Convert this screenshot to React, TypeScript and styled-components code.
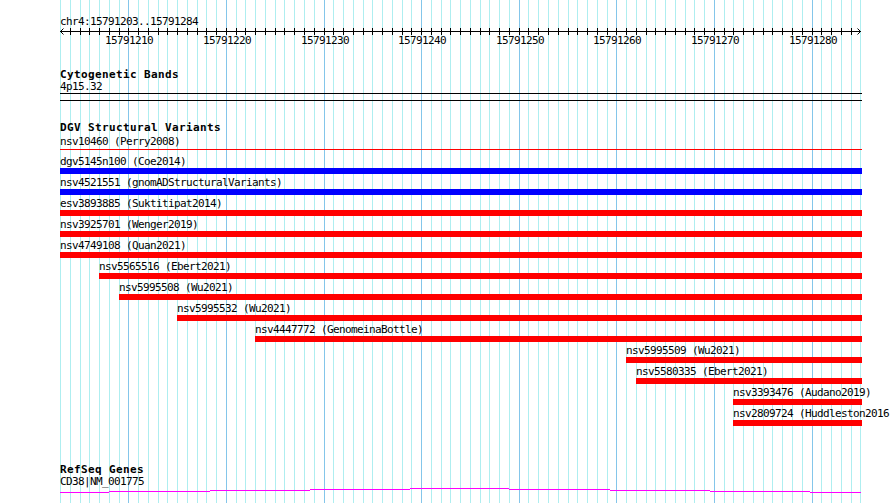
import React from "react";
import styled, { createGlobalStyle } from "styled-components";

const ORIGIN = 60;
const SCALE = 9.76;
const START_BP = 15791203;
const SPAN_BP = 82;
const TRACK_WIDTH = 802;

const pos = (k: number) => Math.round(ORIGIN + k * SCALE);
const rel = (k: number) => pos(k) - ORIGIN;

const GlobalStyle = createGlobalStyle`
  html, body {
    margin: 0;
    padding: 0;
    background: #ffffff;
    overflow: hidden;
  }
`;

const Page = styled.div`
  position: relative;
  width: 890px;
  height: 503px;
  overflow: hidden;
  background: #ffffff;
  color: #000000;
  font-family: "DejaVu Sans Mono", "Liberation Mono", monospace;
`;

const GridLayer = styled.svg`
  position: absolute;
  top: 0;
  left: 0;
  width: 890px;
  height: 503px;
  z-index: 0;
`;

const Column = styled.div`
  position: relative;
  z-index: 1;
  display: flex;
  flex-direction: column;
  width: ${TRACK_WIDTH}px;
  margin-left: ${ORIGIN}px;
`;

const Header = styled.header`
  display: flex;
  flex-direction: column;
  padding-top: 15px;
`;

const Label = styled.div`
  font-size: 11px;
  line-height: 13px;
  letter-spacing: -0.62px;
  white-space: nowrap;
`;

const RulerSvg = styled.svg`
  display: block;
  overflow: visible;
  width: ${TRACK_WIDTH}px;
  height: 18px;
`;

const RulerText = styled.text`
  font-family: "DejaVu Sans Mono", "Liberation Mono", monospace;
  font-size: 11px;
  letter-spacing: -0.62px;
  fill: #000000;
`;

const Track = styled.section<{ $gap: number }>`
  display: flex;
  flex-direction: column;
  margin-top: ${(p) => p.$gap}px;
`;

const TrackTitle = styled.h2`
  margin: 0;
  padding-top: 2px;
  font-size: 11px;
  font-weight: bold;
  line-height: 10px;
  letter-spacing: 0.38px;
  white-space: nowrap;
`;

const BandOutline = styled.div`
  box-sizing: border-box;
  height: 8px;
  border-top: 1px solid #000000;
  border-bottom: 1px solid #000000;
`;

const FeatureRow = styled.div`
  display: flex;
  flex-direction: column;
`;

const FeatureLabel = styled(Label)`
  padding-top: 2px;
`;

const Bar = styled.div<{ $color: string }>`
  height: 6px;
  background: ${(p) => p.$color};
`;

const ThinBar = styled.div`
  height: 1px;
  margin: 1px 0 3px;
  background: #ff0000;
`;

const GeneSvg = styled.svg`
  display: block;
  width: ${TRACK_WIDTH}px;
  height: 5px;
`;

type Feature = { name: string; source: string; startK: number; color: string; thin?: boolean };

const BLUE = "#0000ff";
const RED = "#ff0000";

const features: Feature[] = [
  { name: "nsv10460", source: "Perry2008", startK: 0, color: RED, thin: true },
  { name: "dgv5145n100", source: "Coe2014", startK: 0, color: BLUE },
  { name: "nsv4521551", source: "gnomADStructuralVariants", startK: 0, color: BLUE },
  { name: "esv3893885", source: "Suktitipat2014", startK: 0, color: RED },
  { name: "nsv3925701", source: "Wenger2019", startK: 0, color: RED },
  { name: "nsv4749108", source: "Quan2021", startK: 0, color: RED },
  { name: "nsv5565516", source: "Ebert2021", startK: 4, color: RED },
  { name: "nsv5995508", source: "Wu2021", startK: 6, color: RED },
  { name: "nsv5995532", source: "Wu2021", startK: 12, color: RED },
  { name: "nsv4447772", source: "GenomeinaBottle", startK: 20, color: RED },
  { name: "nsv5995509", source: "Wu2021", startK: 58, color: RED },
  { name: "nsv5580335", source: "Ebert2021", startK: 59, color: RED },
  { name: "nsv3393476", source: "Audano2019", startK: 69, color: RED },
  { name: "nsv2809724", source: "Huddleston2016", startK: 69, color: RED },
];

const geneSteps: Array<[number, number, number]> = [
  [60, 109, 4],
  [109, 210, 3],
  [210, 310, 2],
  [310, 410, 1],
  [410, 509, 0],
  [509, 610, 1],
  [610, 710, 2],
  [710, 810, 3],
  [810, 861, 4],
];

const Grid: React.FC = () => {
  const lines = [];
  for (let k = 0; k <= SPAN_BP; k++) {
    const major = (START_BP + k) % 10 === 0;
    const x = pos(k) + 0.5;
    lines.push(
      <line
        key={k}
        x1={x}
        x2={x}
        y1={0}
        y2={503}
        stroke={major ? "#84c6ea" : "#aeeef0"}
        strokeWidth={1}
      />
    );
  }
  return (
    <GridLayer viewBox="0 0 890 503" shapeRendering="crispEdges">
      {lines}
    </GridLayer>
  );
};

const Ruler: React.FC = () => {
  const ticks = [];
  const labels = [];
  for (let k = 1; k < SPAN_BP; k++) {
    const x = rel(k) + 0.5;
    ticks.push(<line key={k} x1={x} x2={x} y1={0} y2={7} stroke="#000" />);
    const bp = START_BP + k;
    if (bp % 10 === 0) {
      labels.push(
        <RulerText key={`l${k}`} x={rel(k) + 1} y={16} textAnchor="middle">
          {bp}
        </RulerText>
      );
    }
  }
  const end = TRACK_WIDTH - 1.5;
  return (
    <RulerSvg viewBox={`0 0 ${TRACK_WIDTH} 18`}>
      <g shapeRendering="crispEdges" stroke="#000" fill="none">
        <line x1={0} x2={TRACK_WIDTH - 1} y1={3.5} y2={3.5} />
        {ticks}
      </g>
      <g stroke="#000" fill="none" strokeWidth={1}>
        <polyline points="3.5,0.5 0.5,3.5 3.5,6.5" />
        <polyline points={`${end - 3},0.5 ${end},3.5 ${end - 3},6.5`} />
      </g>
      {labels}
    </RulerSvg>
  );
};

const App: React.FC = () => {
  return (
    <>
      <GlobalStyle />
      <Page>
        <Grid />
        <Column>
          <Header>
            <Label>chr4:15791203..15791284</Label>
            <Ruler />
          </Header>

          <Track $gap={22}>
            <TrackTitle>Cytogenetic Bands</TrackTitle>
            <Label>4p15.32</Label>
            <BandOutline />
          </Track>

          <Track $gap={20}>
            <TrackTitle>DGV Structural Variants</TrackTitle>
            {features.map((f) => (
              <FeatureRow key={f.name} style={{ marginLeft: rel(f.startK) }}>
                <FeatureLabel>{`${f.name} (${f.source})`}</FeatureLabel>
                {f.thin ? <ThinBar /> : <Bar $color={f.color} />}
              </FeatureRow>
            ))}
          </Track>

          <Track $gap={37}>
            <TrackTitle>RefSeq Genes</TrackTitle>
            <Label>CD38|NM_001775</Label>
            <GeneSvg viewBox={`0 0 ${TRACK_WIDTH} 5`} shapeRendering="crispEdges">
              {geneSteps.map(([a, b, y]) => (
                <rect key={a} x={a - ORIGIN} y={y} width={b - a} height={1} fill="#ff00ff" />
              ))}
            </GeneSvg>
          </Track>
        </Column>
      </Page>
    </>
  );
};

export default App;
